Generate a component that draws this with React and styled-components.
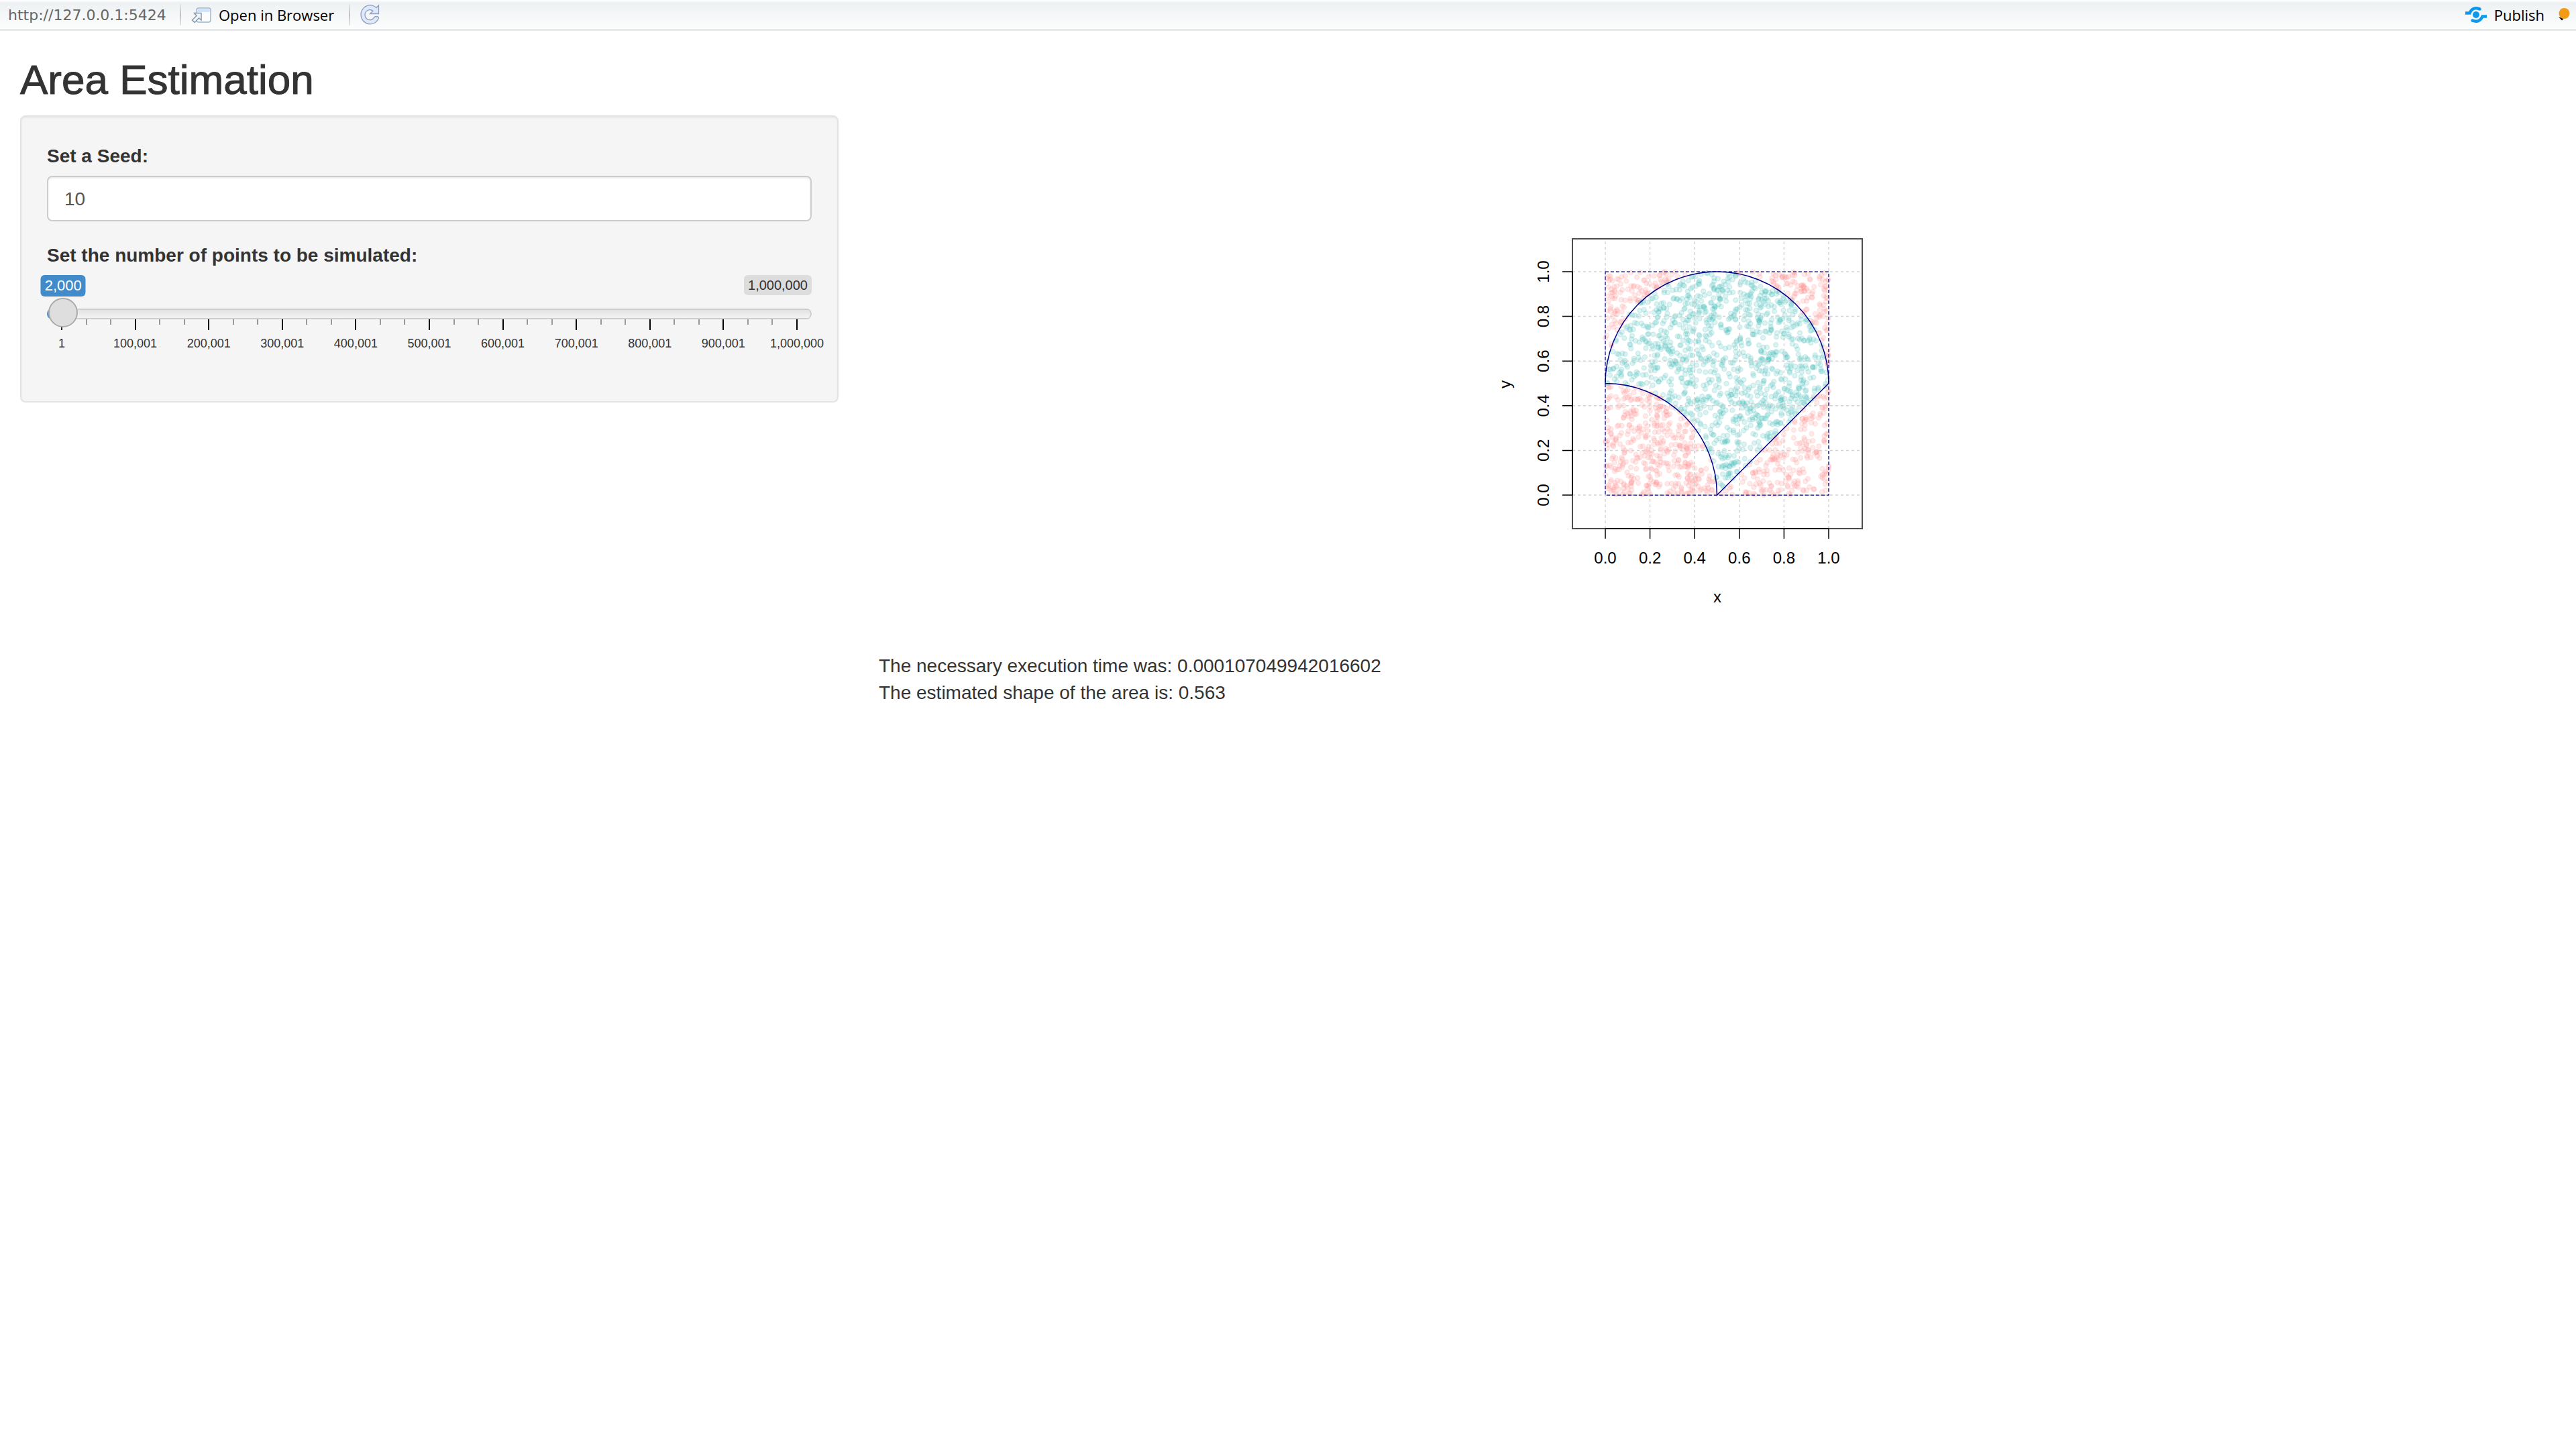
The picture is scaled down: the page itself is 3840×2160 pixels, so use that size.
import React, { useState } from "react";
import styled, { createGlobalStyle } from "styled-components";

const Global = createGlobalStyle`
  * { box-sizing: border-box; }
  body {
    margin: 0;
    background: #fff;
    color: #333;
    font: 28px/40px "Liberation Sans", Arial, sans-serif;
  }
`;

/* ---------- viewer toolbar ---------- */

const Toolbar = styled.header`
  display: flex;
  align-items: center;
  height: 46px;
  padding: 0 9px 0 12px;
  border-bottom: 3px solid #e6e8ea;
  background: linear-gradient(#fff 0, #eef1f3 4px, #fcfdfd 100%);
  font: 22px/28px "Open Sans", "Noto Sans", sans-serif;
`;

const Address = styled.a`
  flex: 0 0 256px;
  padding-top: 2px;
  color: #666;
  font-family: "DejaVu Sans", sans-serif;
  text-decoration: none;
`;

const Divider = styled.span`
  width: 2px;
  height: 32px;
  background: linear-gradient(#e4e6e8, #bfc2c4, #e4e6e8);
`;

const ToolButton = styled.button`
  display: flex;
  align-items: center;
  gap: 10px;
  margin: 0 ${(p) => p.$after || 0}px 0 ${(p) => p.$before || 0}px;
  padding: 0;
  border: 0;
  background: none;
  color: #000;
  font: inherit;
`;

const Spacer = styled.div`
  flex: 1;
`;

/* ---------- page ---------- */

const Title = styled.h2`
  margin: 40px 0 20px;
  padding: 0 30px;
  font-size: 62px;
  line-height: 66px;
  font-weight: 400;
  -webkit-text-stroke: 1px #333;
`;

const Layout = styled.main`
  display: grid;
  grid-template-columns: minmax(0, 1fr) minmax(0, 2fr);
  align-items: start;
`;

const Column = styled.div`
  padding: 0 30px;
`;

const Well = styled.form`
  display: flex;
  flex-direction: column;
  padding: 38px 38px 76px;
  border: 2px solid #e3e3e3;
  border-radius: 8px;
  background: #f5f5f5;
  box-shadow: inset 0 2px 2px rgba(0, 0, 0, 0.05);
`;

const Label = styled.label`
  margin-bottom: 8px;
  line-height: 42px;
  font-weight: 700;
`;

const NumberInput = styled.input`
  width: 100%;
  height: 68px;
  margin: 0 0 30px;
  padding: 14px 24px 12px;
  border: 2px solid #ccc;
  border-radius: 8px;
  background: #fff;
  color: #555;
  font: inherit;
  box-shadow: inset 0 2px 2px rgba(0, 0, 0, 0.075);
  appearance: textfield;
`;

/* ---------- slider ---------- */

const Tags = styled.div`
  position: relative;
  display: flex;
  justify-content: flex-end;
  align-items: flex-start;
  height: 34px;
`;

const MaxTag = styled.span`
  padding: 0 6px;
  border-radius: 6px;
  background: #dddddd;
  font-size: 20px;
  line-height: 30px;
`;

const ValueTag = styled.output`
  position: absolute;
  top: 0;
  padding: 0 6px;
  border-radius: 6px;
  background: #428bca;
  color: #fff;
  font-size: 22px;
  line-height: 32px;
  transform: translateX(-50%);
`;

const Range = styled.input`
  position: relative;
  z-index: 1;
  width: 100%;
  height: 48px;
  margin: 0;
  background: transparent;
  appearance: none;

  &::-webkit-slider-runnable-track {
    height: 16px;
    border-radius: 16px;
    background: linear-gradient(#428bca, #428bca) 0 0 / 16px 100% no-repeat,
      linear-gradient(#ccc 2px, #e2e2e2 2px, #f3f3f3 14px, #ccc 14px);
    box-shadow: inset -2px 0 0 #ccc;
  }
  &::-webkit-slider-thumb {
    width: 44px;
    height: 44px;
    margin-top: -16px;
    border: 2px solid #aaa;
    border-radius: 50%;
    background: #dedede;
    box-shadow: 2px 2px 6px rgba(255, 255, 255, 0.3);
    appearance: none;
  }
`;

const Scale = styled.div`
  display: flex;
  justify-content: space-between;
  height: 46px;
  margin-top: -16px;
  padding: 0 21px;
`;

const Tick = styled.div`
  display: flex;
  flex-direction: column;
  align-items: center;
  gap: 10px;
  width: 2px;
  font-size: 18px;
  line-height: 20px;

  &::before {
    content: "";
    flex: none;
    width: 2px;
    height: ${(p) => (p.$major ? 16 : 8)}px;
    background: ${(p) => (p.$major ? "#000" : "#999")};
  }
`;

const Plot = styled.svg`
  display: block;
  margin: 0 auto;
  font: 24px "Liberation Sans", Arial, sans-serif;
`;

const Result = styled.p`
  margin: 0;
  padding-top: 1px;
  line-height: 40px;
`;

/* ---------- simulation ---------- */

/* Mersenne Twister seeded the way R's set.seed() does it. */
function createRunif(start) {
  let seed = start >>> 0;
  const next = () => (seed = (Math.imul(69069, seed) + 1) >>> 0);
  for (let j = 0; j < 51; j++) next();
  const mt = new Uint32Array(624);
  for (let j = 0; j < 624; j++) mt[j] = next();
  let i = 624;
  return () => {
    if (i >= 624) {
      for (let k = 0; k < 624; k++) {
        const y = (mt[k] & 0x80000000) | (mt[(k + 1) % 624] & 0x7fffffff);
        mt[k] = mt[(k + 397) % 624] ^ (y >>> 1) ^ (y & 1 ? 0x9908b0df : 0);
      }
      i = 0;
    }
    let y = mt[i++];
    y ^= y >>> 11;
    y ^= (y << 7) & 0x9d2c5680;
    y ^= (y << 15) & 0xefc60000;
    y ^= y >>> 18;
    return (y >>> 0) * 2.3283064365386963e-10;
  };
}

const inside = (x, y) =>
  y >= 0.5
    ? (x - 0.5) ** 2 + (y - 0.5) ** 2 <= 0.25
    : x * x + y * y > 0.25 && y > x - 0.5;

function simulate(seed, n) {
  const runif = createRunif(seed);
  const xs = Array.from({ length: n }, runif);
  return xs.map((x) => {
    const y = runif();
    return { x, y, hit: inside(x, y) };
  });
}

/* ---------- chart ---------- */

const LEFT = 183;
const BOTTOM = 566;
const SIZE = 333;
const px = (x) => LEFT + SIZE * x;
const py = (y) => BOTTOM - SIZE * y;
const STEPS = [0, 0.2, 0.4, 0.6, 0.8, 1];

function AreaPlot({ points }) {
  return (
    <Plot width="700" height="800" viewBox="0 0 700 800" role="img" aria-label="Simulated points">
      <g fillOpacity="0.18" strokeOpacity="0.16" strokeWidth="1.5">
        {points.map((p, i) => {
          const color = p.hit ? "#3cbcb8" : "#ff8c8c";
          return <circle key={i} cx={px(p.x)} cy={py(p.y)} r="3.5" fill={color} stroke={color} />;
        })}
      </g>
      <g stroke="#d3d3d3" strokeWidth="1.5" strokeDasharray="4 4">
        {STEPS.map((s) => (
          <path key={s} d={`M${px(s)} 616V184M134 ${py(s)}H566`} />
        ))}
      </g>
      <g fill="none" stroke="#00008b" strokeWidth="1.5">
        <rect x={LEFT} y={py(1)} width={SIZE} height={SIZE} strokeWidth="1.25" strokeDasharray="5 3" />
        <path
          d={`M${px(0)} ${py(0.5)}A${SIZE / 2} ${SIZE / 2} 0 0 1 ${px(1)} ${py(0.5)}L${px(0.5)} ${py(0)}A${SIZE / 2} ${SIZE / 2} 0 0 0 ${px(0)} ${py(0.5)}Z`}
        />
      </g>
      <rect x="134" y="184" width="432" height="432" fill="none" stroke="#4d4d4d" strokeWidth="2" />
      <g stroke="#000" strokeWidth="1.5">
        <path d={`M${px(0)} 616H${px(1)}M134 ${py(0)}V${py(1)}`} />
        {STEPS.map((s) => (
          <path key={s} d={`M${px(s)} 616v15M134 ${py(s)}h-15`} />
        ))}
      </g>
      <g fill="#000" textAnchor="middle">
        {STEPS.map((s) => (
          <React.Fragment key={s}>
            <text x={px(s)} y="668">{s.toFixed(1)}</text>
            <text transform={`translate(99 ${py(s)}) rotate(-90)`}>{s.toFixed(1)}</text>
          </React.Fragment>
        ))}
        <text x="350" y="726">x</text>
        <text transform="translate(42 401) rotate(-90)">y</text>
      </g>
    </Plot>
  );
}

/* ---------- icons ---------- */

const WindowIcon = () => (
  <svg width="32" height="26" viewBox="0 0 32 26">
    <rect x="9" y="3" width="21" height="21" rx="3" fill="#fafcfe" stroke="#9fb3c5" strokeWidth="1.4" />
    <path d="M9.7 9V6q0-2.3 2.3-2.3h15q2.3 0 2.3 2.3v3z" fill="#cfe5fb" />
    <path d="M5.5 10.5H16V21l-3.500-3-6.500 6.500-3.500-3.500L9 14.500z" fill="#f1f6fb" stroke="#7f95a8" strokeWidth="1.4" />
  </svg>
);

const RefreshIcon = () => (
  <svg width="30" height="32" viewBox="0 0 30 32">
    <path
      d="M25 5.5 28.5 2V14.5H15.5L20 10.2A7.4 7.6 0 1 0 21 21Q22 18.5 25 18.5 29 18.8 28.5 21A13.7 14 0 1 1 25 5.5Z"
      fill="#dfe9fb"
      stroke="#8f9fbd"
      strokeWidth="1.3"
    />
  </svg>
);

const PublishIcon = () => (
  <svg width="34" height="26" viewBox="0 0 34 26" fill="none" stroke="#0d99ee" strokeWidth="4.5">
    <circle cx="17" cy="13" r="5" fill="#0d99ee" stroke="none" />
    <path d="M1 10.5H7.5C10 4.5 15 1.5 22.5 4.5" />
    <path d="M33 15.5H26.5C24 21.5 19 24.5 11.5 21.5" />
    <path d="M22.4 4.4h.1M11.5 21.6h.1" strokeLinecap="round" />
  </svg>
);

const MenuIcon = () => (
  <svg width="18" height="22" viewBox="0 0 18 22">
    <path d="M1 14 6 19.5 8.5 17z" fill="#000" />
    <circle cx="9.5" cy="9" r="8" fill="#f49b14" />
  </svg>
);

/* ---------- app ---------- */

const MAX = 1000000;
const format = (n) => n.toLocaleString("en-US");

export default function App() {
  const [seed, setSeed] = useState(10);
  const [count, setCount] = useState(2000);
  const points = simulate(seed, count);
  const area = points.filter((p) => p.hit).length / count;

  return (
    <>
      <Global />
      <Toolbar>
        <Address href="#">http://127.0.0.1:5424</Address>
        <Divider />
        <ToolButton type="button" $before={14} $after={22}>
          <WindowIcon />
          Open in Browser
        </ToolButton>
        <Divider />
        <ToolButton type="button" $before={14} aria-label="Refresh">
          <RefreshIcon />
        </ToolButton>
        <Spacer />
        <ToolButton type="button" $after={20}>
          <PublishIcon />
          Publish
        </ToolButton>
        <ToolButton type="button" aria-label="Publish options">
          <MenuIcon />
        </ToolButton>
      </Toolbar>
      <Title>Area Estimation</Title>
      <Layout>
        <Column>
          <Well>
            <Label htmlFor="seed">Set a Seed:</Label>
            <NumberInput
              id="seed"
              type="number"
              value={seed}
              onChange={(e) => setSeed(Number(e.target.value))}
            />
            <Label htmlFor="points">Set the number of points to be simulated:</Label>
            <Tags>
              <ValueTag
                htmlFor="points"
                style={{ left: `calc(22px + (100% - 44px) * ${count / MAX})` }}
              >
                {format(count)}
              </ValueTag>
              <MaxTag>{format(MAX)}</MaxTag>
            </Tags>
            <Range
              id="points"
              type="range"
              min={1}
              max={MAX}
              value={count}
              onChange={(e) => setCount(Number(e.target.value))}
            />
            <Scale>
              {Array.from({ length: 31 }, (_, i) => (
                <Tick key={i} $major={i % 3 === 0}>
                  {i % 3 === 0 && format(Math.min(MAX, (i / 3) * 100000 + 1))}
                </Tick>
              ))}
            </Scale>
          </Well>
        </Column>
        <Column>
          <AreaPlot points={points} />
          <Result>
            The necessary execution time was: 0.000107049942016602
            <br />
            The estimated shape of the area is: {area.toFixed(3)}
          </Result>
        </Column>
      </Layout>
    </>
  );
}
